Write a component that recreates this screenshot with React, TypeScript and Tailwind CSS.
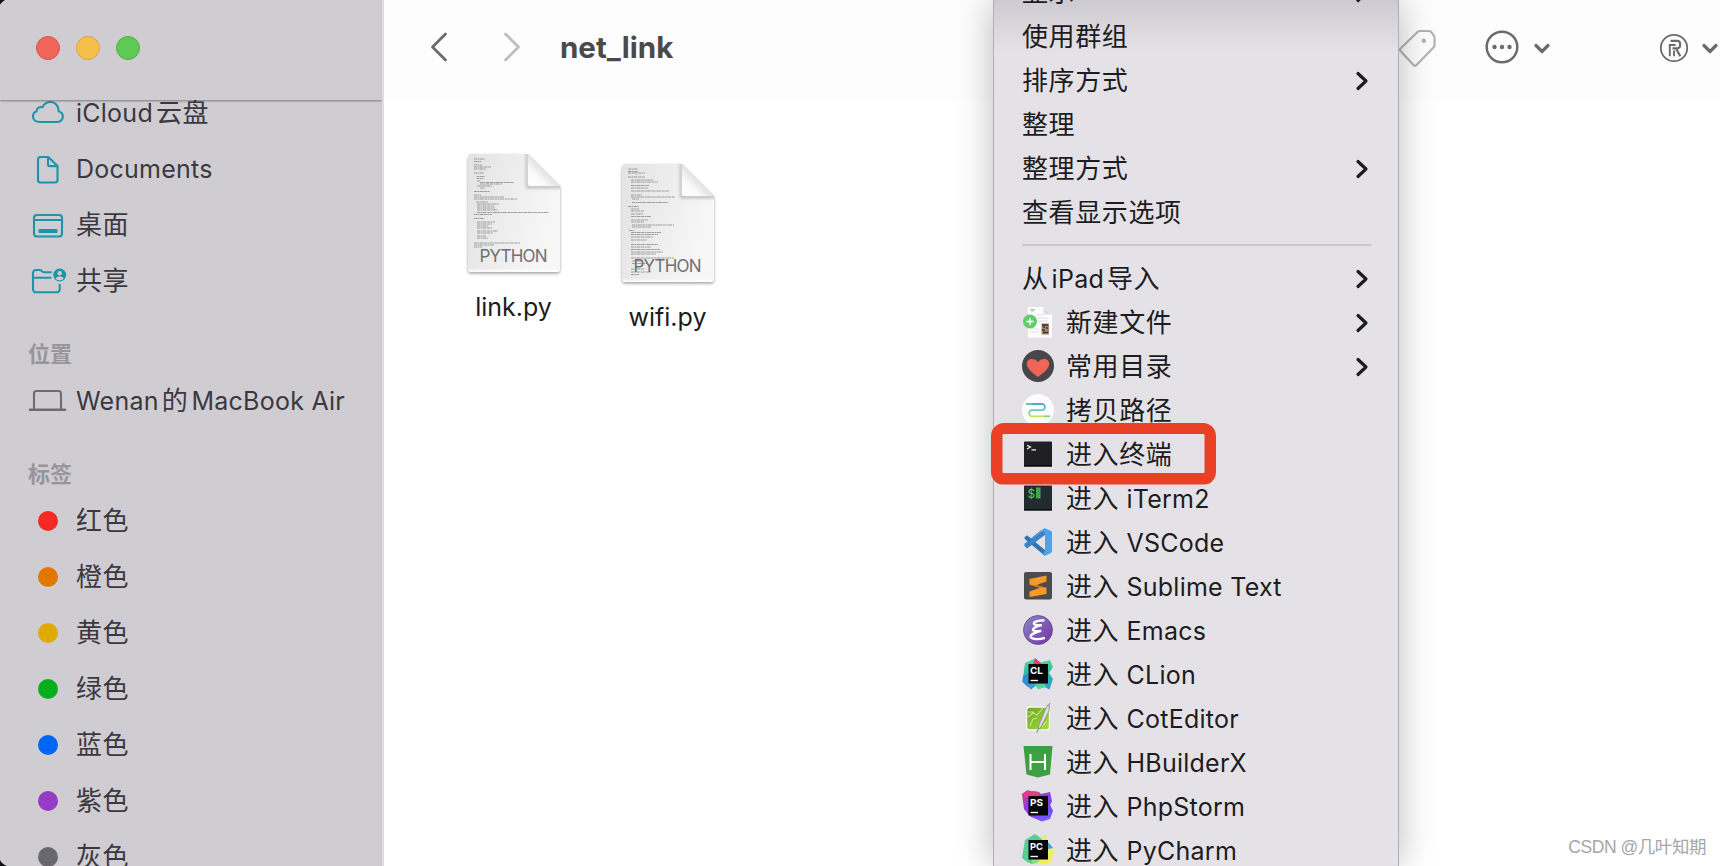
import type { ReactNode } from "react";

/* ---------- text ---------- */

function Label({ text }: { text: string }) {
  const runs = text.match(/[\u3400-\u9fff]+|[^\u3400-\u9fff]+/g) ?? [];
  return (
    <span className="whitespace-pre text-[25px] leading-[30px] tracking-[0.25px]">
      {runs.map((run, i) => {
        const cjk = /[\u3400-\u9fff]/.test(run);
        if (cjk) {
          return (
            <span key={i} className="text-[26px] tracking-[0.6px]">
              {run}
            </span>
          );
        }
        const padLeft = i > 0 && !run.startsWith(" ");
        const padRight = i < runs.length - 1;
        return (
          <span key={i} className={`${padLeft ? "ml-[3px]" : ""} ${padRight ? "mr-[3px]" : ""}`}>
            {run}
          </span>
        );
      })}
    </span>
  );
}

/* ---------- sidebar ---------- */

function SideSvg({ children }: { children: ReactNode }) {
  return (
    <svg viewBox="0 0 40 32" className="h-8 w-10" fill="none" stroke="currentColor" strokeWidth="2.100" strokeLinecap="round" strokeLinejoin="round">
      {children}
    </svg>
  );
}

const cloudIcon = (
  <SideSvg>
    <path d="M12 25h16.500c4.200 0 6.300-2.400 6.300-5.500 0-2.900-1.900-4.600-4.200-5.200C30.700 8.700 27.200 5 22.500 5c-3.800 0-6.600 2-8 5.200-3.400-.8-6 1.300-6 4.300-2.300.6-3.500 2.400-3.500 4.900C5 22.700 7.700 25 12 25z" />
  </SideSvg>
);
const docIcon = (
  <SideSvg>
    <path d="M12.500 4h7.800L29.500 13v14a2.500 2.500 0 0 1-2.500 2.500H12.500A2.500 2.500 0 0 1 10 27V6.500A2.500 2.500 0 0 1 12.500 4zM20 4.300v6.900c0 1.200.7 1.900 1.900 1.900h7.300" />
  </SideSvg>
);
const desktopIcon = (
  <SideSvg>
    <rect x="6" y="6" width="28" height="21.500" rx="3" />
    <path d="M6 11h28" strokeWidth="1.800" />
    <rect x="10.500" y="20" width="19" height="4" rx="1" fill="currentColor" stroke="none" />
  </SideSvg>
);
const sharedIcon = (
  <SideSvg>
    <path d="M31.700 19v5.300a3 3 0 0 1-3 3H8a3 3 0 0 1-3-3V8a3 3 0 0 1 3-3h3.500c2.500 0 2.500 2.300 5 2.300h7.300M5 12.700h18.500" strokeLinecap="butt" />
    <circle cx="31.700" cy="10" r="6.500" fill="currentColor" stroke="none" />
    <circle cx="31.700" cy="8.300" r="2.200" fill="#cfccd2" stroke="none" />
    <path d="M27.700 13.700c.6-1.700 2.200-2.200 4-2.200s3.400.5 4 2.200c-2.200 2-5.800 2-8 0z" fill="#cfccd2" stroke="none" />
  </SideSvg>
);
const laptopIcon = (
  <SideSvg>
    <path d="M6 23.500V8.500A2.500 2.500 0 0 1 8.500 6h22A2.500 2.500 0 0 1 33 8.500v15" />
    <path d="M2 24.700h35" strokeWidth="2.600" />
  </SideSvg>
);

const favorites: [string, ReactNode][] = [
  ["iCloud云盘", cloudIcon],
  ["Documents", docIcon],
  ["桌面", desktopIcon],
  ["共享", sharedIcon],
];

const tags: [string, string][] = [
  ["红色", "bg-[#f52a24]"],
  ["橙色", "bg-[#e17600]"],
  ["黄色", "bg-[#dfab00]"],
  ["绿色", "bg-[#07ad1d]"],
  ["蓝色", "bg-[#0066f5]"],
  ["紫色", "bg-[#963bc6]"],
  ["灰色", "bg-[#68676d]"],
];

function SideRow({ icon, text }: { icon: ReactNode; text: string }) {
  return (
    <div className="flex h-14 shrink-0 items-center pl-7">
      <div className="flex w-12 shrink-0 items-center">{icon}</div>
      <Label text={text} />
    </div>
  );
}

function SideHeading({ text }: { text: string }) {
  return (
    <div className="h-16 shrink-0 pl-7 pt-[30px] text-[22px] font-bold leading-[30px] text-[#97959b]">
      {text}
    </div>
  );
}

function Sidebar() {
  return (
    <aside className="relative flex h-full w-96 shrink-0 flex-col overflow-hidden border-r-2 border-[#dedce1] bg-[#cfccd2] text-[#3b393f]">
      <div className="z-10 flex h-[100px] shrink-0 items-center gap-4 pb-1 pl-9 shadow-[0_1px_2px_0_rgba(0,0,0,0.4)]">
        <span className="size-6 rounded-full border border-[#d8564c] bg-[#f16558]" />
        <span className="size-6 rounded-full border border-[#d9a440] bg-[#f6be4b]" />
        <span className="size-6 rounded-full border border-[#4eb143] bg-[#60c854]" />
      </div>
      <div className="flex min-h-0 flex-1 flex-col overflow-hidden">
        <div className="-mt-[15px] flex flex-col">
          {favorites.map(([text, icon]) => (
            <SideRow key={text} text={text} icon={<span className="text-[#1f93a8]">{icon}</span>} />
          ))}
          <SideHeading text="位置" />
          <SideRow text="Wenan的MacBook Air" icon={<span className="text-[#6e6c72]">{laptopIcon}</span>} />
          <SideHeading text="标签" />
          {tags.map(([text, color]) => (
            <SideRow key={text} text={text} icon={<span className={`ml-[10px] size-[19.500px] rounded-full ${color}`} />} />
          ))}
        </div>
      </div>
      <svg viewBox="0 0 6 6" className="absolute left-0 top-0 size-1.5">
        <path d="M0 0h5Q2 1.500 0 4.500z" fill="#111" />
      </svg>
      <svg viewBox="0 0 8 8" className="absolute bottom-0 left-0 size-2">
        <path d="M0 2Q2 6 7 8H0z" fill="#111" />
      </svg>
    </aside>
  );
}

/* ---------- files ---------- */

type CodeLine = [number, number, number];

const linkCode: CodeLine[] = [
  [6, 5, 11], [6, 7.500, 7], [6, 11, 8], [6, 13, 17], [6, 15, 12], [6, 19, 10], [8.500, 22.500, 8], [8.500, 24.500, 7], [9, 27, 3],
  [12, 28.500, 34], [12, 30, 22], [9, 32, 15], [12, 34, 5], [6, 37.500, 16], [6, 41, 7], [6, 43, 30], [6, 45, 43], [8, 48, 12],
  [9, 50, 22], [9, 52, 17], [9, 54, 18], [9, 56, 21], [9, 58.500, 72], [6, 60.500, 18], [6, 64.500, 10], [9, 68, 18], [9, 70, 15],
  [9, 72, 11], [9, 74, 15], [9, 77, 21], [9, 79, 16], [9, 82, 9], [9, 84, 11], [6, 89, 46], [6, 91, 20], [6, 93, 8],
];
const wifiCode: CodeLine[] = [
  [6, 5, 10], [6, 7.500, 10], [6, 9, 17], [6, 13, 17], [9, 16, 22], [9, 18, 27], [9, 21.500, 18], [9, 24, 17], [9, 27, 38],
  [9, 31, 11], [9, 33, 44], [10, 35, 7], [10, 38.500, 36], [6, 42.500, 11], [9, 45, 8], [9, 47, 13], [9, 50, 12], [9, 52.500, 20],
  [9, 56, 17], [9, 58, 13], [10, 61, 42], [10, 63, 19], [7, 66.500, 5], [9, 68.500, 30], [9, 70.500, 27], [9, 73, 22], [9, 76, 16],
  [9, 80.500, 27], [9, 83, 20], [9, 85.500, 29], [9, 88, 32], [9, 90, 25], [9, 94, 43], [10, 97, 11], [10, 99.500, 15], [9, 105, 14],
  [9, 108, 20], [9, 110.500, 8],
];

function FileItem({ id, name, code }: { id: string; name: string; code: CodeLine[] }) {
  return (
    <div className="flex w-[154px] flex-col items-center text-[#1c1c1c]">
      <svg viewBox="0 0 98 126" className="h-[126px] w-[98px]">
        <defs>
          <linearGradient id={`${id}-page`} x1="0" y1="0" x2="1" y2="0.300">
            <stop offset="0" stopColor="#e3e3e3" />
            <stop offset="1" stopColor="#f7f7f7" />
          </linearGradient>
          <linearGradient id={`${id}-fold`} x1="0" y1="1" x2="0.550" y2="0.450">
            <stop offset="0" stopColor="#ffffff" />
            <stop offset="0.500" stopColor="#fafafa" />
            <stop offset="1" stopColor="#dcdcdc" />
          </linearGradient>
          <filter id={`${id}-blur`} x="-30%" y="-30%" width="160%" height="160%">
            <feGaussianBlur stdDeviation="1.600" />
          </filter>
          <clipPath id={`${id}-clip`}>
            <path d="M6 3h57l32 32v83a3 3 0 0 1-3 3H6a3 3 0 0 1-3-3V6a3 3 0 0 1 3-3z" />
          </clipPath>
        </defs>
        <path d="M6 4.500h57l32 32v83a3 3 0 0 1-3 3H6a3 3 0 0 1-3-3V7.500z" fill="#777" opacity="0.700" filter={`url(#${id}-blur)`} />
        <g clipPath={`url(#${id}-clip)`}>
          <path d="M3 3h60l32 32v86H3z" fill={`url(#${id}-page)`} />
          <rect x="3" y="118.500" width="92" height="2.500" fill="#fff" opacity="0.700" />
          <path d="M62.500 1v34h35v2H64a3 3 0 0 1-3-3V1z" fill="#555" opacity="0.500" filter={`url(#${id}-blur)`} />
          {code.map(([x, y, w], i) => (
            <path key={i} d={`M${x + 3} ${y + 3}h${w}`} stroke="#555" strokeWidth="0.800" strokeDasharray="3 0.500 1.700 0.400 4 0.600" opacity="0.650" />
          ))}
        </g>
        <path d="M63 3l32 32H65.500a2.500 2.500 0 0 1-2.500-2.500z" fill={`url(#${id}-fold)`} />
        <text x="14.500" y="111" fontSize="17" textLength="68" fill="#6f6f6f" className="font-['Inter',sans-serif]">
          PYTHON
        </text>
      </svg>
      <span className="-ml-px mt-[15px] text-[25px] leading-[30px]">{name}</span>
    </div>
  );
}

/* ---------- toolbar ---------- */

function Chevron({ className, d, width }: { className: string; d: string; width: number }) {
  return (
    <svg viewBox="0 0 18 30" className={className} fill="none" stroke="currentColor" strokeWidth={width} strokeLinecap="round" strokeLinejoin="round">
      <path d={d} />
    </svg>
  );
}

function DownChevron() {
  return (
    <svg viewBox="0 0 18 12" className="h-3 w-[18px]" fill="none" stroke="currentColor" strokeWidth="3.200" strokeLinecap="round" strokeLinejoin="round">
      <path d="M3 2.500l6 6 6-6" />
    </svg>
  );
}

function Toolbar() {
  return (
    <header className="flex h-[100px] shrink-0 items-center bg-[#fdfdfd] pb-[6px] pl-[46px] text-[#6b6b6b]">
      <Chevron className="h-[30px] w-[18px]" d="M15.500 2L2.500 15l13 13" width={2.800} />
      <Chevron className="ml-[55px] h-[30px] w-[18px] text-[#bebebe]" d="M2.500 2l13 13-13 13" width={2.800} />
      <h1 className="mb-px ml-[39px] text-[29.500px] font-bold leading-[36px] text-[#4a4a4a]">net_link</h1>
      <div className="ml-auto flex items-center">
        <svg viewBox="0 0 40 40" className="mt-[3px] size-10 text-[#b3b3b3]" fill="none" stroke="currentColor" strokeWidth="2.200" strokeLinejoin="round">
          <path d="M2.500 19.500L19.500 3c.8-.8 1.400-1 2.500-1h9c1 0 1.500.2 2.200 1l2.600 3.500c.6.700.7 1.200.7 2v7.500c0 1-.3 1.700-1 2.500L18.500 36c-1 1-2 1-3 0l-13-14c-.8-.9-.8-1.600 0-2.500z" />
          <circle cx="25.800" cy="11.800" r="2.200" fill="currentColor" stroke="none" />
        </svg>
        <svg viewBox="0 0 34 34" className="ml-[47px] size-[34px]" fill="none" stroke="currentColor" strokeWidth="2.500">
          <circle cx="17" cy="17" r="15.300" />
          <g fill="currentColor" stroke="none">
            <circle cx="9.500" cy="17" r="2.200" />
            <circle cx="17" cy="17" r="2.200" />
            <circle cx="24.500" cy="17" r="2.200" />
          </g>
        </svg>
        <div className="ml-[14px] mt-[3px]"><DownChevron /></div>
        <svg viewBox="0 0 30 30" className="ml-[108px] mt-[2px] size-[30px]" fill="none" stroke="currentColor" strokeWidth="1.800">
          <circle cx="15" cy="15" r="13.200" />
          <path d="M11.500 7.800h7a2.500 2.500 0 0 1 2.500 2.500v2.500a2.500 2.500 0 0 1-2.500 2.500h-5M17.300 16l4 7.200" strokeWidth="2.200" />
          <path d="M10.800 12.500v10.700M15 17.500v5.700M9.700 12h7" strokeWidth="1.900" />
        </svg>
        <div className="ml-[12px] mr-px mt-[3px]"><DownChevron /></div>
      </div>
    </header>
  );
}

/* ---------- context menu ---------- */

function Ic({ children }: { children: ReactNode }) {
  return (
    <svg viewBox="0 0 32 32" className="size-8">
      {children}
    </svg>
  );
}

function JetBadge({ letters, children }: { letters: string; children: ReactNode }) {
  return (
    <Ic>
      {children}
      <rect x="6.500" y="6" width="19.500" height="19.500" fill="#050505" />
      <text x="8" y="15.500" fontSize="9.500" fontWeight="700" textLength="13" lengthAdjust="spacingAndGlyphs" fill="#fff" className="font-['Inter',sans-serif]">
        {letters}
      </text>
      <rect x="8.500" y="21.800" width="7.500" height="1.400" fill="#fff" />
    </Ic>
  );
}

const newFileIcon = (
  <Ic>
    <path d="M7 1h15l8 8v21.500a1 1 0 0 1-1 1H7a1 1 0 0 1-1-1V2a1 1 0 0 1 1-1z" fill="#fdfdfd" />
    <path d="M21.500 1v7.500h8z" fill="#dddde0" />
    <path d="M8 3.500h5M9 5h3" stroke="#8fcf92" strokeWidth="1.200" />
    <path d="M14 9h7M15 12h11M15 15h11M8 23h9M8 26h9" stroke="#dedee2" strokeWidth="1" />
    <rect x="19.500" y="17.500" width="7.500" height="11" fill="#a3876a" />
    <path d="M20 19h6M21 21h2M24 22h2M20 24h3M21 26.500h5" stroke="#3a3230" strokeWidth="1.300" />
    <circle cx="8" cy="15.500" r="7" fill="#62cd6d" />
    <path d="M8 12v7M4.500 15.500h7" stroke="#fff" strokeWidth="1.300" />
  </Ic>
);
const heartIcon = (
  <Ic>
    <circle cx="16" cy="16" r="16" fill="#47474a" />
    <path d="M16 27C10 22.500 4.800 18.500 4.800 13.800 4.800 10.600 7.200 9 9.800 9c2.700 0 4.800 1.200 6.200 3.200C17.400 10.200 19.500 9 22.200 9c2.600 0 5 1.600 5 4.800 0 4.700-5.200 8.700-11.200 13.200z" fill="#f0655a" />
  </Ic>
);
const pathIcon = (
  <Ic>
    <defs>
      <linearGradient id="route" x1="0" y1="0" x2="0" y2="1">
        <stop offset="0" stopColor="#48a9df" />
        <stop offset="0.500" stopColor="#68cbbb" />
        <stop offset="1" stopColor="#c8df62" />
      </linearGradient>
    </defs>
    <circle cx="16" cy="16" r="16" fill="#fcfcfd" />
    <path d="M4 10h16.500a3.200 3.200 0 0 1 0 6.200H9.500a3.200 3.200 0 0 0 0 6.200H22" fill="none" stroke="url(#route)" strokeWidth="1.800" />
    <path d="M22 22.300h6" stroke="#83cf93" strokeWidth="1.800" />
    <path d="M4 10.100h6" stroke="#67cda0" strokeWidth="1.800" />
  </Ic>
);
const terminalIcon = (
  <Ic>
    <rect x="2" y="3.500" width="28" height="25" rx="0.800" fill="#202022" />
    <rect x="2" y="27" width="28" height="1.500" fill="#08080a" />
    <path d="M5 7.200l3.500 1.900L5 11M9.500 11.800h4.500" fill="none" stroke="#f0f0f0" strokeWidth="1.200" />
  </Ic>
);
const itermIcon = (
  <Ic>
    <rect x="2" y="3.500" width="28" height="25" rx="0.800" fill="#232b30" />
    <rect x="2" y="27" width="28" height="1.500" fill="#0b1013" />
    <text x="5.500" y="15.500" fontSize="12" fill="#50d45a" className="font-['Inter',sans-serif]">$</text>
    <rect x="14" y="5.500" width="4.500" height="11" fill="#3fa746" />
  </Ic>
);
const vscodeIcon = (
  <Ic>
    <path d="M22.500 2L5.500 18.500 3 20.500 2.300 19v-1.200L18 5z" fill="#3f97da" />
    <path d="M2.300 11.500L5 9.300 23 24v6L2.800 13z" fill="#2f73b8" />
    <path d="M2.300 19.500L5 22.500 23 9V2.500z" fill="#3b82c6" />
    <path d="M22.500 2l6.500 3c.7.400 1 .8 1 1.500v19c0 .7-.3 1.100-1 1.500l-6.500 3-1.500-2 2-4V8l-2-4z" fill="#4ba3ea" />
    <path d="M23 9.500v13L14.500 16z" fill="#e4e2e7" />
  </Ic>
);
const sublimeIcon = (
  <Ic>
    <rect x="2" y="2" width="28" height="27.500" rx="2" fill="#4c4b4d" />
    <path d="M24.500 5.500v6L14 15.200l10.500 2.600v6.200L7.500 27v-5.500l10.500-3.700-10.500-3V9z" fill="#f79a29" />
    <path d="M7.500 14.500l10.500 3.200 6.500.2-10.500-2.800z" fill="#d77f1d" />
  </Ic>
);
const emacsIcon = (
  <Ic>
    <defs>
      <linearGradient id="emacs" x1="0" y1="0" x2="1" y2="1">
        <stop offset="0" stopColor="#8a84cc" />
        <stop offset="1" stopColor="#7435a2" />
      </linearGradient>
    </defs>
    <circle cx="16" cy="16" r="14.500" fill="url(#emacs)" stroke="#5c4a8a" strokeWidth="0.800" />
    <path d="M21.500 6.500c-4-.3-9.500 1-9.700 2.900-.2 1.700 4.500 1.900 8 1.700-4.500.9-9.300 2.900-8.800 4.800.4 1.500 5 1.300 8.200 1-4.700 1.100-11.200 3.600-10.700 5.900.6 2.400 8 3.200 13.500 1.400" fill="none" stroke="#fff" strokeWidth="2.300" strokeLinecap="round" />
  </Ic>
);
const clionIcon = (
  <JetBadge letters="CL">
    <defs>
      <linearGradient id="clion" x1="0" y1="0" x2="0" y2="1">
        <stop offset="0" stopColor="#57d795" />
        <stop offset="0.550" stopColor="#2cb3b0" />
        <stop offset="1" stopColor="#329adf" />
      </linearGradient>
    </defs>
    <path d="M3 5L13 .5l5 4L28 2l3 7-4 6 4 6-3.500 10.500L16 26l-7 5.500-8.500-8z" fill="url(#clion)" />
    <path d="M1 18l5-2v13l-5.500-5z" fill="#338bd8" />
    <path d="M13 0l6 5-1 2h-7z" fill="#e23c79" />
    <path d="M13 26l8-.5 4 3-9 3z" fill="#4ed39a" />
  </JetBadge>
);
const cotIcon = (
  <Ic>
    <defs>
      <linearGradient id="cot" x1="0" y1="0" x2="1" y2="1">
        <stop offset="0" stopColor="#6ea52b" />
        <stop offset="1" stopColor="#a8dc3c" />
      </linearGradient>
    </defs>
    <rect x="4" y="4.500" width="24" height="24" rx="3.500" fill="#fafaf5" />
    <rect x="5.300" y="5.800" width="21.500" height="21.500" rx="2.500" fill="url(#cot)" />
    <path d="M6 15l5-4 4 2 6-7M8 24l3-7 4-1M6 10h6M20 25l5-6" stroke="#c8e87a" strokeWidth="1.100" fill="none" />
    <path d="M25.500 3l1.800.8L27 9l-8 16-2.500 2.500.3-4L23 8z" fill="#dadddc" stroke="#84898b" strokeWidth="0.800" />
    <path d="M26.500 4L28 1M17 26.500l-2.500 4" stroke="#9a9d9f" strokeWidth="1.400" />
  </Ic>
);
const hbuilderIcon = (
  <Ic>
    <path d="M1.500 0h29L28 28.500 16 31.500 4.500 28.500z" fill="#3f9f43" />
    <path d="M8.500 8v16M23 8v16M8.500 16H23" stroke="#fff" strokeWidth="2" fill="none" />
  </Ic>
);
const phpstormIcon = (
  <JetBadge letters="PS">
    <defs>
      <linearGradient id="phps" x1="0" y1="0" x2="0.700" y2="1">
        <stop offset="0" stopColor="#d83b9d" />
        <stop offset="0.450" stopColor="#913bdc" />
        <stop offset="1" stopColor="#715bff" />
      </linearGradient>
    </defs>
    <path d="M5 .5L17 2l2 2 9-2 2 9-2 4 3 6-3 8-8 2.500L9 27l-3-3-4-5L0 4z" fill="url(#phps)" />
    <path d="M5 .5L17 2v5H7l-6 0-1-3z" fill="#dc3f87" />
    <path d="M26 13l4-2-2 4 3 6-5 2z" fill="#704fe6" />
  </JetBadge>
);
const pycharmIcon = (
  <JetBadge letters="PC">
    <path d="M3 6L13 0l7 5-2 20-8 5-5-2-5-4z" fill="#56cf91" />
    <path d="M18 4l6-3 1 6z" fill="#dff06d" />
    <path d="M22 8l5 1 4 5-5 3z" fill="#3fa3d8" />
    <path d="M26 15l5-1-1 14-9 3-5-3v-5h10z" fill="#eff05b" />
    <path d="M10 24h8l-2 5-6 1z" fill="#8ddd7d" />
  </JetBadge>
);

type Entry = { text: string; icon?: ReactNode; sub?: boolean };

const topEntries: Entry[] = [
  { text: "显示", sub: true },
  { text: "使用群组" },
  { text: "排序方式", sub: true },
  { text: "整理" },
  { text: "整理方式", sub: true },
  { text: "查看显示选项" },
];

const bottomEntries: Entry[] = [
  { text: "从iPad导入", sub: true },
  { text: "新建文件", icon: newFileIcon, sub: true },
  { text: "常用目录", icon: heartIcon, sub: true },
  { text: "拷贝路径", icon: pathIcon },
  { text: "进入终端", icon: terminalIcon },
  { text: "进入 iTerm2", icon: itermIcon },
  { text: "进入 VSCode", icon: vscodeIcon },
  { text: "进入 Sublime Text", icon: sublimeIcon },
  { text: "进入 Emacs", icon: emacsIcon },
  { text: "进入 CLion", icon: clionIcon },
  { text: "进入 CotEditor", icon: cotIcon },
  { text: "进入 HBuilderX", icon: hbuilderIcon },
  { text: "进入 PhpStorm", icon: phpstormIcon },
  { text: "进入 PyCharm", icon: pycharmIcon },
];

function MenuRow({ text, icon, sub }: Entry) {
  return (
    <div className="flex h-11 shrink-0 items-center">
      {icon && <div className="mb-[2px] mr-3 shrink-0">{icon}</div>}
      <Label text={text} />
      {sub && (
        <svg viewBox="0 0 14 20" className="ml-auto mr-[2.500px] h-5 w-3.5" fill="none" stroke="currentColor" strokeWidth="3.200" strokeLinecap="round" strokeLinejoin="round">
          <path d="M3 2.500l8 7.500-8 7.500" />
        </svg>
      )}
    </div>
  );
}

function ContextMenu() {
  return (
    <div className="absolute left-[993px] top-0 h-full w-[406px] border-x border-[#b1afb4] bg-[#e4e2e7] bg-linear-to-b from-[#cdcbd1] via-[#e4e2e7] via-[6%] to-[#e4e2e7] text-[#1d1c20] shadow-[0_0_34px_rgba(0,0,0,0.27)]">
      <div className="h-full overflow-hidden pl-7 pr-[27px]">
        <div className="-mt-[29px] flex flex-col">
          {topEntries.map((e) => (
            <MenuRow key={e.text} {...e} />
          ))}
          <div className="h-[22px] pt-[9px]">
            <div className="h-[2px] bg-[#c8c6cb]" />
          </div>
          {bottomEntries.map((e) => (
            <MenuRow key={e.text} {...e} />
          ))}
        </div>
      </div>
      <div className="absolute -left-[3px] top-[422.500px] h-[62px] w-[225px] rounded-[13px] bg-[#ea4126] [clip-path:path(evenodd,'M0_0H225V62H0ZM11.500_12.500_Q11.500_11.500_12.500_11.500_H212.500_Q213.500_11.500_213.500_12.500_V49.500_Q213.500_50.500_212.500_50.500_H12.500_Q11.500_50.500_11.500_49.500Z')]" />
    </div>
  );
}

export default function App() {
  return (
    <div className="relative flex h-[866px] w-[1720px] overflow-hidden bg-white font-['Inter','Noto_Sans_CJK_SC',sans-serif]">
      <Sidebar />
      <main className="flex min-w-0 flex-1 flex-col">
        <Toolbar />
        <div className="flex items-start pl-[53px] pt-[51px]">
          <FileItem id="a" name="link.py" code={linkCode} />
          <div className="pt-[10px]">
            <FileItem id="b" name="wifi.py" code={wifiCode} />
          </div>
        </div>
      </main>
      <ContextMenu />
      <div className="absolute bottom-[7px] right-[14px] whitespace-pre font-['Liberation_Sans','Noto_Sans_CJK_SC',sans-serif] text-[17.500px] leading-6 tracking-[-0.45px] text-[#a6a6a6]">
        CSDN @几叶知期
      </div>
    </div>
  );
}
